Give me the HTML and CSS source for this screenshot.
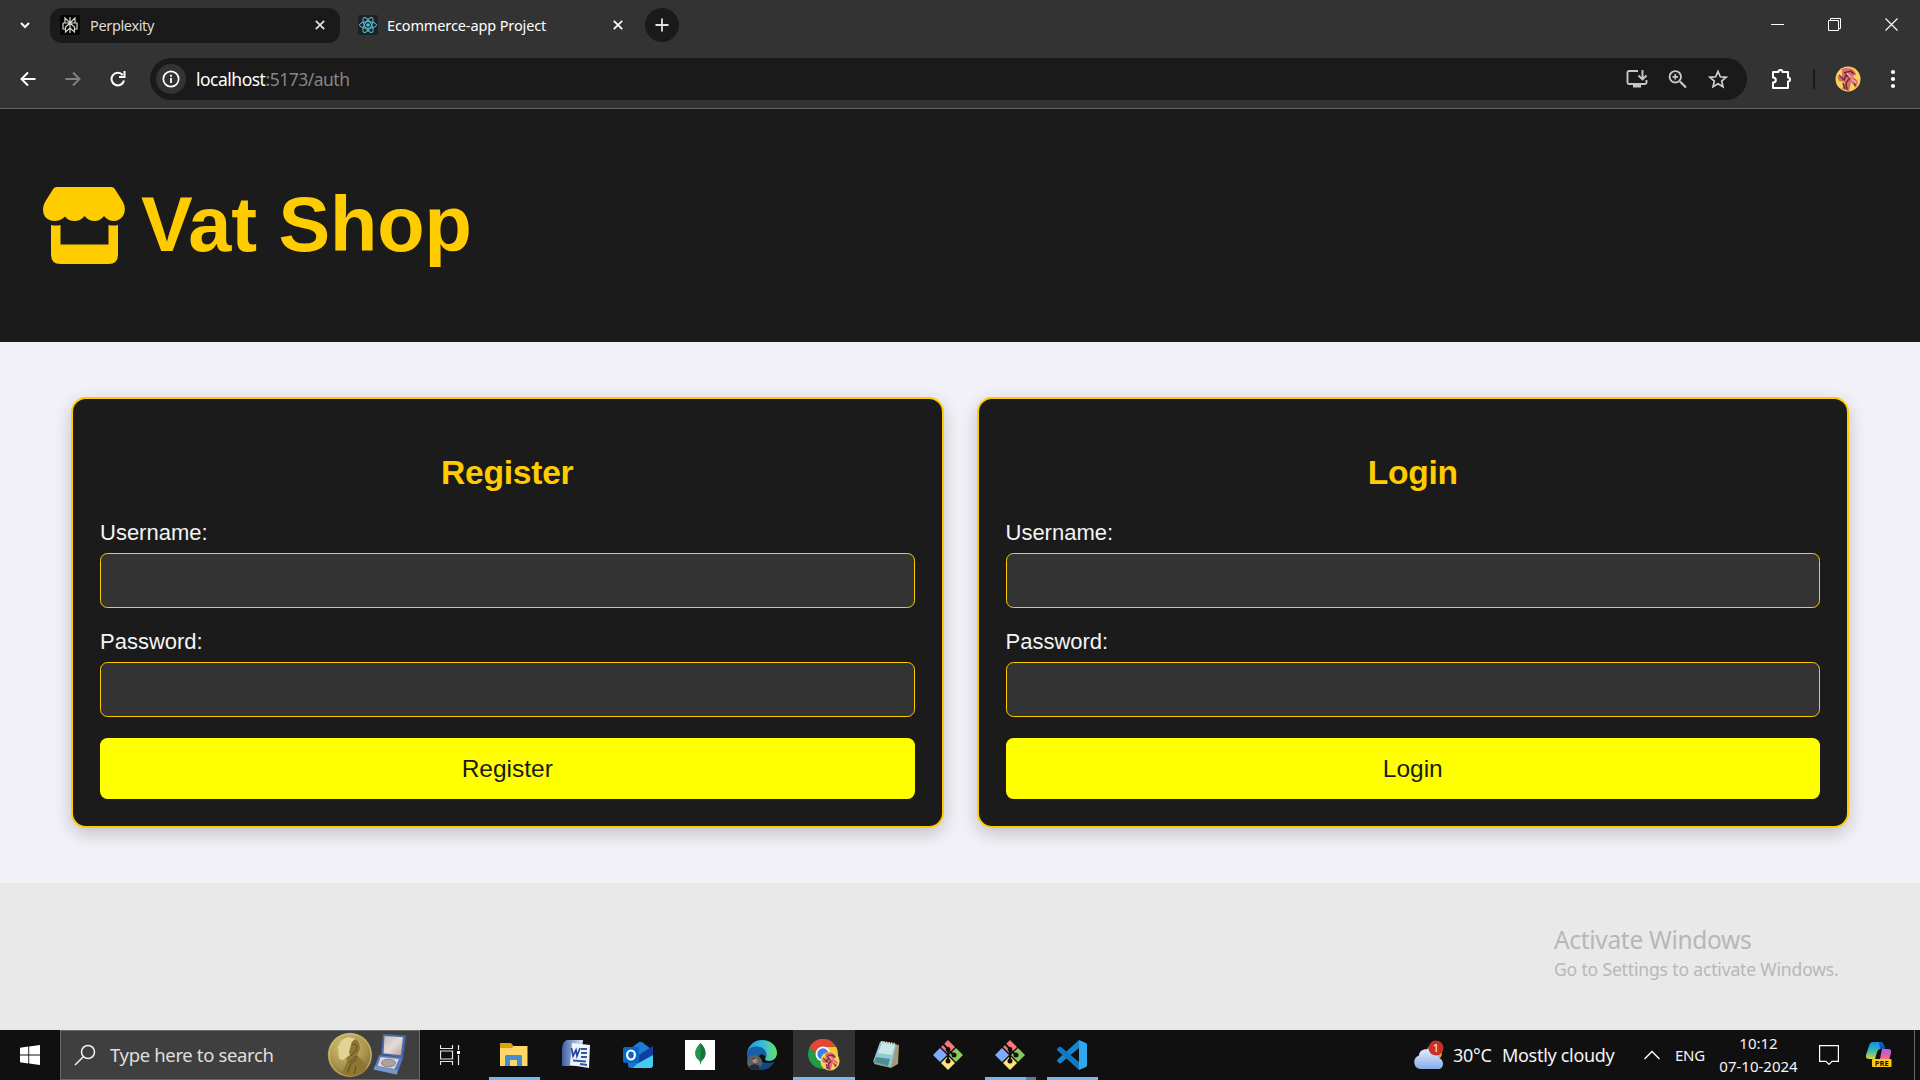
FILE: index.html
```html
<!DOCTYPE html>
<html lang="en">
<head>
<meta charset="utf-8">
<title>Ecommerce-app Project</title>
<link rel="stylesheet" href="styles.css">
</head>
<body>
<div class="tabstrip">
  <svg class="tab-search" width="12" height="12" viewBox="0 0 12 12"><path d="M2 4l4 4 4-4" fill="none" stroke="#fff" stroke-width="2"/></svg>
  <div class="tab tab-idle">
    <svg width="20" height="20" viewBox="0 0 20 20"><rect width="20" height="20" rx="2" fill="#050505"/><path d="M10 2v16M5 3l5 5 5-5v5H5zM3 8h14v6h-2.500M3 8v6h2.500M10 8l-4.500 4v5l4.500-4 4.500 4v-5z" fill="none" stroke="#d8d6cc" stroke-width="1.200"/></svg>
    <span class="tab-title">Perplexity</span>
    <svg class="x" width="10" height="10" viewBox="0 0 10 10"><path d="M.8.800l8.400 8.400M9.200.800L.8 9.200" stroke="#e3e3e3" stroke-width="1.700"/></svg>
  </div>
  <div class="tab tab-active">
    <svg width="20" height="20" viewBox="0 0 20 20"><rect width="20" height="20" rx="2" fill="#202124"/><g fill="none" stroke="#58c4dc" stroke-width="1"><ellipse cx="10" cy="10" rx="8.500" ry="3.300"/><ellipse cx="10" cy="10" rx="8.500" ry="3.300" transform="rotate(60 10 10)"/><ellipse cx="10" cy="10" rx="8.500" ry="3.300" transform="rotate(120 10 10)"/></g><circle cx="10" cy="10" r="1.700" fill="#58c4dc"/></svg>
    <span class="tab-title wide">Ecommerce-app Project</span>
    <svg class="x" width="10" height="10" viewBox="0 0 10 10"><path d="M.8.800l8.400 8.400M9.200.800L.8 9.200" stroke="#fff" stroke-width="1.700"/></svg>
  </div>
  <div class="new-tab"><svg width="14" height="14" viewBox="0 0 14 14"><path d="M7 .5v13M.5 7h13" stroke="#e3e3e3" stroke-width="1.800"/></svg></div>
  <div class="window-controls">
    <svg width="14" height="14" viewBox="0 0 14 14"><path d="M0 6.500h13" stroke="#fff"/></svg>
    <svg width="14" height="14" viewBox="0 0 14 14"><path d="M.5 2.500h10v10H.5zM2.500 2V.5h10v10H11" fill="none" stroke="#fff"/></svg>
    <svg width="14" height="14" viewBox="0 0 14 14"><path d="M.5.500l12 12M12.500.500l-12 12" stroke="#fff" stroke-width="1.100"/></svg>
  </div>
</div>
<div class="toolbar">
  <div class="nav-buttons">
    <svg width="16" height="16" viewBox="0 0 16 16"><path d="M15.500 8H2M8 1.500L1.500 8 8 14.500" fill="none" stroke="#fff" stroke-width="2"/></svg>
    <svg width="16" height="16" viewBox="0 0 16 16"><path d="M.5 8H14M8 1.500L14.500 8 8 14.500" fill="none" stroke="#818181" stroke-width="1.900"/></svg>
    <svg width="16" height="16" viewBox="0 0 16 16"><path d="M14 9.500A6.300 6.300 0 1 1 12.700 4" fill="none" stroke="#fff" stroke-width="2"/><path d="M15.500 0v7H9V5h4.500V0z" fill="#fff"/></svg>
  </div>
  <div class="omnibox">
    <div class="site-info"><svg width="18" height="18" viewBox="0 0 18 18"><circle cx="9" cy="9" r="7.700" fill="none" stroke="#fff" stroke-width="1.700"/><path d="M9 8v5M9 4.800v1.900" stroke="#fff" stroke-width="1.800"/></svg></div>
    <span class="url">localhost<span class="url-rest">:5173/auth</span></span>
    <div class="page-actions">
      <svg width="22" height="20" viewBox="0 0 22 20"><path d="M12 2H3Q1.500 2 1.500 3.500v10Q1.500 15 3 15H19Q20.500 15 20.500 13.500V11M16.500 1v9M12.500 6.500l4 4 4-4" fill="none" stroke="#c7c7c7" stroke-width="1.900"/><path d="M7 15h8v3.500H7z" fill="#c7c7c7"/></svg>
      <svg width="20" height="20" viewBox="0 0 20 20"><path d="M12 12.500l6 6" stroke="#c7c7c7" stroke-width="2.200"/><circle cx="7.300" cy="7.800" r="5.700" fill="none" stroke="#c7c7c7" stroke-width="1.900"/><path d="M7.300 5v5.600M4.500 7.800h5.600" stroke="#c7c7c7" stroke-width="1.700"/></svg>
      <svg width="20" height="20" viewBox="0 0 20 20"><path d="M10 2.500l2.300 5.300 5.700.5-4.300 3.800 1.300 5.600-5-3-5 3 1.300-5.600L2 8.300l5.700-.5z" fill="none" stroke="#d0d0d0" stroke-width="1.700"/></svg>
    </div>
  </div>
  <div class="toolbar-end">
    <svg width="22" height="22" viewBox="0 0 22 22"><path d="M2 4h5.500a2 2 0 0 1 4 0H17v5.500a2 2 0 0 1 0 4V20H2v-5.500c3.800 0 3.800-5 0-5z" fill="none" stroke="#fff" stroke-width="2" stroke-linejoin="round"/></svg>
    <span class="divider"></span>
    <svg width="26" height="26" viewBox="0 0 26 26"><use href="#avatar"/></svg>
    <svg width="6" height="20" viewBox="0 0 6 20"><g fill="#fff"><circle cx="3" cy="3" r="2.100"/><circle cx="3" cy="10" r="2.100"/><circle cx="3" cy="17" r="2.100"/></g></svg>
  </div>
</div>

<header class="site-header">
  <svg class="shop-icon" width="82" height="77" viewBox="0 0 82 77" fill="#fc0"><path d="M13.500 0H68.500Q70.500 0 71.500 1.500L80 15C85 25 79 34 71 34Q65 34 61 29Q57.500 34 51.500 34Q45.500 34 41.500 29Q38 34 31.500 34Q25.500 34 22 29.500Q17.500 34 11 34C2 34-3 25 2 15L10.500 1.500Q11.500 0 13.500 0zM8 38Q12.500 39 17.500 38V57.500H65.500V38Q70.500 39 75 38V67.500Q75 77 65.500 77H17.500Q8 77 8 67.500z"/></svg>
  <h1>Vat Shop</h1>
</header>
<main class="auth">
  <form class="card">
    <h2>Register</h2>
    <label>Username:<input type="text"></label>
    <label>Password:<input type="password"></label>
    <button type="button">Register</button>
  </form>
  <form class="card">
    <h2>Login</h2>
    <label>Username:<input type="text"></label>
    <label>Password:<input type="password"></label>
    <button type="button">Login</button>
  </form>
</main>
<section class="desktop">
  <div class="activation"><p class="act-title">Activate Windows</p><p class="act-sub">Go to Settings to activate Windows.</p></div>
</section>

<footer class="taskbar">
  <div class="start"><svg width="20" height="20" viewBox="0 0 20 20"><path d="M0 2.700L8.300 1.500V9.500H0zM9.200 1.400L20 0V9.500H9.200zM0 10.500H8.300V18.500L0 17.300zM9.200 10.500H20V20L9.200 18.600z" fill="#fff"/></svg></div>
  <div class="search">
    <svg width="22" height="22" viewBox="0 0 22 22"><circle cx="14" cy="8" r="6.500" fill="none" stroke="#f2f2f2" stroke-width="1.500"/><path d="M9.300 12.700L1 21" stroke="#f2f2f2" stroke-width="1.500"/></svg>
    <span class="search-text">Type here to search</span>
    <svg class="medal" width="80" height="46" viewBox="0 0 80 46">
      <defs><radialGradient id="gold" cx=".4" cy=".3" r=".8"><stop offset="0" stop-color="#d7c67a"/><stop offset=".6" stop-color="#a8924b"/><stop offset="1" stop-color="#75602a"/></radialGradient><linearGradient id="satin" x2="1" y2="1"><stop offset="0" stop-color="#c9b8b0"/><stop offset=".5" stop-color="#e5dcd8"/><stop offset="1" stop-color="#b5a39c"/></linearGradient></defs>
      <circle cx="23" cy="23" r="22.200" fill="url(#gold)"/><circle cx="23" cy="23" r="21" fill="none" stroke="#d6c887" stroke-width=".8"/>
      <path d="M15 7c5-4 14-3 17 4 2 5 0 9-2 12l7 7c3 3 3 6 1 8-4 5-10 6-15 6-3 0-6-1-8-2l5-13z" fill="#8d7733"/><path d="M14 9c3-5 10-5 15-2-3 1-5 3-5 6l-2 7 1 3-7 5c-4 0-5-3-4-7l-1-2 1-2-2-1 3-4z" fill="#e0d393"/><path d="M25 13c4-3 6 1 4 5l-5 6M22 31l8-7M20 41l4-9 6-5M27 42l2-8" fill="none" stroke="#5f4d1d" stroke-width="1"/>
      <path d="M56 2l23 1.500-3 22-22-3z" fill="#4a68ad"/><path d="M57.500 4l18.500 1.300-2.200 18-17.300-2z" fill="url(#satin)"/><path d="M52 23l24 2.500-6 17-23.500-5z" fill="#5878bd"/><path d="M53.500 25l18.500 2-4.500 10-17-3z" fill="#ddd4d4"/><ellipse cx="61.500" cy="31" rx="7" ry="3.800" fill="#aaa3a2" stroke="#777" stroke-width=".8"/><path d="M46.500 37.500L70 42.500V38l-22-4z" fill="#7794cb"/>
    </svg>
  </div>
  <div class="app task-view"><svg width="20" height="20" viewBox="0 0 20 20"><path d="M.5 0v3.500h12V0M.5 20v-3.500h12V20M.5 6h12v8H.5zM18.500 0v5M18.500 10v10" fill="none" stroke="#e8e8e8" stroke-width="1.200"/><path d="M17 6h3v3h-3z" fill="#fff"/></svg></div>
  <div class="app open"><svg width="30" height="30" viewBox="0 0 30 30"><path d="M1 3h11l2.500 3H28v5H1z" fill="#e39e0b"/><path d="M1 8h12l2-2h13.500v20H1z" fill="#ffd766"/><path d="M6 26V16.500Q6 15 7.500 15h14Q23 15 23 16.500V26h-5v-6h-7v6z" fill="#3f8fd2"/></svg></div>
  <div class="app"><svg width="30" height="30" viewBox="0 0 30 30"><defs><linearGradient id="word"><stop offset="0" stop-color="#3c5da5"/><stop offset="1" stop-color="#dbe5f7"/></linearGradient></defs><path d="M6 0h16l-3 26H1V8Q2 1 6 0z" fill="url(#word)"/><path d="M11 3l18 2-1 23-19-3z" fill="#eef3fc"/><path d="M20 9h6M20 13h6M20 17h6M12 20.500l13 1M19 24l7 1" stroke="#3358a4" stroke-width="1.800"/><path d="M10.500 8l1.500 8 3-6 1 6 3-8" fill="none" stroke="#244a98" stroke-width="1.700"/></svg></div>
  <div class="app"><svg width="30" height="30" viewBox="0 0 30 30"><path d="M4 11L16 2Q17.500 1.300 19 2l10 8v15q0 3-3 3H8q-3 0-3-3z" fill="#2373c9"/><path d="M9 8l9-6 10 7-11 8z" fill="#1b7fd3"/><path d="M14 16l16-10v9L16 24z" fill="#123f9d"/><path d="M14 24l16-9v10q0 3-3 3H10z" fill="#45ccf1"/><rect y="7" width="16" height="16" rx="2" fill="#0868c4"/><ellipse cx="8" cy="15" rx="3.900" ry="4.500" fill="none" stroke="#fff" stroke-width="2.200"/></svg></div>
  <div class="app"><svg width="30" height="30" viewBox="0 0 30 30"><path d="M0 0h30v30H0z" fill="#fff"/><path d="M15.500 3c6 6 7 13 1 18l-1 4-1-4C8 16 9 9 15.500 3z" fill="#249447"/><path d="M15.500 3c6 6 7 13 1 18l-1 1z" fill="#157538"/></svg></div>
  <div class="app"><svg width="30" height="30" viewBox="0 0 30 30"><defs><linearGradient id="wave"><stop offset="0" stop-color="#218fd7"/><stop offset=".5" stop-color="#35bce1"/><stop offset="1" stop-color="#65df67"/></linearGradient></defs><path d="M0 15C0 6 7 0 15 0c9 0 15 6 15 13 0 5-4 8-8 8-2 0-4-1-4-2 3-5-1-9-5-9z" fill="url(#wave)"/><path d="M0 15C0 8 7 5 13 7c5 1 8 6 6 11-1-3-4-5-6-3-4 4 3 11 14 7-3 6-10 9-17 7C4 27 0 22 0 15z" fill="#1560a8"/><path d="M13 15c-4 4 3 11 14 7-3 6-10 9-17 7-2-5-2-11 3-14z" fill="#124a88"/><circle cx="7.500" cy="22.500" r="7.500" fill="#5b6062"/><path d="M2 28c1-5 10-5 11 0q-5 4-11 0z" fill="#222c36"/><circle cx="8" cy="20.500" r="2.500" fill="#b18874"/><path d="M5.500 20q0-4 5 0l-1-1h-3z" fill="#222"/></svg></div>
  <div class="app focused"><svg width="32" height="32" viewBox="0 0 32 32"><circle cx="15" cy="15" r="15" fill="#229b49"/><path d="M2 7.500A15 15 0 0 1 28 7.500L15 8 9 17z" fill="#e84435"/><path d="M15 8h13.200A15 15 0 0 1 15 30l7-11z" fill="#fbc52b"/><circle cx="15" cy="15" r="7.500" fill="#fff"/><circle cx="15" cy="15" r="5.700" fill="#3b80ee"/><svg x="12" y="12" width="20" height="20" viewBox="0 0 26 26"><g id="avatar"><circle cx="13" cy="13" r="12.500" fill="#f8d05c"/><path d="M7 3c7-3 14 1 14 6l-4 1 6 5-2 7-5-6-2 9-7-2 3-7-6-1-2-5 5 2z" fill="#df686f"/><path d="M9 7l7-2 3 3M4 9l5 5 2-5 4 3-4 5 1 7M19 13l1 7M8 17l2 6M16 6l3 2" fill="none" stroke="#672f39" stroke-width="1.500"/><path d="M12 7l4 5M17 13l4 4" stroke="#f3a3a0" stroke-width="2"/></g></svg></svg></div>
  <div class="app"><svg width="30" height="30" viewBox="0 0 30 30"><path d="M10 1l18 4-1 19-7 4-17-4z" fill="#a69a7c"/><path d="M9 2l16 3-5 22-18-5z" fill="#8fc9d1"/><path d="M11 3l13 2-3 10-14-2z" fill="#c9e7e8"/><path d="M5 17l14 2-2 7-14-4z" fill="#4b8d99"/><path d="M10 2l15 2" stroke="#e8e4d6" stroke-width="2" stroke-dasharray="1.500 1"/></svg></div>
  <div class="app"><svg width="30" height="30" viewBox="0 0 30 30"><g id="git"><path d="M15 0l7 7-7 7-7-7z" fill="#f87777"/><path d="M7 8l7 7-7 7-7-7z" fill="#7eabff"/><path d="M23 8l7 7-7 7-7-7z" fill="#85cc59"/><path d="M15 16l7 7-7 7-7-7z" fill="#ffe279"/><path d="M10 4l5 5v12M15 10l6 5" fill="none" stroke="#111" stroke-width="1.900"/><circle cx="15" cy="9.500" r="2.400" fill="#111"/><circle cx="15" cy="21" r="2.500" fill="#111"/><circle cx="21" cy="15" r="2.500" fill="#111"/></g></svg></div>
  <div class="app open stacked"><svg width="30" height="30" viewBox="0 0 30 30"><use href="#git"/></svg></div>
  <div class="app open"><svg width="30" height="30" viewBox="0 0 30 30"><path d="M22 0v8L4 23q-1 1-2 0L.5 21.500q-1-1 0-2z" fill="#1684ce"/><path d="M22 30v-8L4 7Q3 6 2 7L.5 8.500q-1 1 0 2z" fill="#0f78c2"/><path d="M22 0l7 3q1 .5 1 2v20q0 1.500-1 2l-7 3z" fill="#2fa8ee"/></svg></div>
  <div class="tray">
    <svg class="weather" width="31" height="30" viewBox="0 0 31 30"><defs><linearGradient id="cloud" x2="0" y2="1"><stop offset="0" stop-color="#e2ecfd"/><stop offset="1" stop-color="#86aceb"/></linearGradient></defs><circle cx="21" cy="13" r="8" fill="#f6a21b"/><path d="M7 29a7 7 0 0 1-1-13.500C6 8 18 7 20 14c4-1 6 2 6 4 6 2 5 11-1 11z" fill="url(#cloud)"/><circle cx="23" cy="8" r="7.500" fill="#c9302c"/><text x="23" y="12" class="badge-num">1</text></svg>
    <span class="temp">30°C</span><span class="forecast">Mostly cloudy</span>
    <svg class="caret" width="16" height="10" viewBox="0 0 16 10"><path d="M.5 9L8 1.500 15.500 9" fill="none" stroke="#fff" stroke-width="1.400"/></svg>
    <span class="lang">ENG</span>
    <div class="clock"><span class="time">10:12</span><span class="date">07-10-2024</span></div>
    <svg class="notify" width="20" height="20" viewBox="0 0 20 20"><path d="M.6.600h18.800v15.800H13l-3 3-3-3H.6z" fill="none" stroke="#fff" stroke-width="1.200"/></svg>
    <svg class="copilot" width="26" height="26" viewBox="0 0 26 26"><defs><linearGradient id="cl" x2="0" y2="1"><stop offset="0" stop-color="#168de2"/><stop offset=".5" stop-color="#36b8b2"/><stop offset="1" stop-color="#eacf35"/></linearGradient><linearGradient id="cr" x2="0" y2="1"><stop offset="0" stop-color="#9d69ee"/><stop offset=".5" stop-color="#ec5d99"/><stop offset="1" stop-color="#fa9b62"/></linearGradient></defs><path d="M7 0h8q2 0 3 4l1 3h-5q-2 0-3 3l-2 7H3q-4 0-3-4L3 4q1-4 4-4z" fill="url(#cl)"/><path d="M13 0q4 0 5 4l1 3h-5z" fill="#1550bf"/><path d="M16 7h6q4 0 3 4l-2 7q-1 3-5 3h-8q3 0 4-4z" fill="url(#cr)"/><rect x="6" y="17" width="19.500" height="8" rx="1" fill="#ffca0b"/><text x="15.800" y="24" class="pre">PRE</text></svg>
    <span class="peek"></span>
  </div>
</footer>
</body>
</html>
```
FILE: styles.css
```css
* { box-sizing: border-box; }
body { margin: 0; width: 1920px; height: 1080px; overflow: hidden; display: flex; flex-direction: column; font-family: "Liberation Sans", Arial, sans-serif; background: #e9e9e9; }
svg { display: block; flex: none; }
h1, h2, p { margin: 0; }

.tabstrip, .toolbar, .taskbar { font-family: "Noto Sans", "Open Sans", sans-serif; white-space: nowrap; }
.tabstrip { height: 50px; flex: none; background: #333; display: flex; align-items: center; padding-left: 19px; }
.tab { display: flex; align-items: center; height: 35px; border-radius: 12px; }
.tab-idle { width: 290px; margin-left: 19px; padding: 0 15px 0 10px; background: #1a1a1a; color: #dcdcdc; }
.tab-active { width: 283px; padding: 0 0 0 18px; color: #fff; }
.tab .x { margin-left: auto; }
.tab-title { margin-left: 10px; font-size: 14.500px; letter-spacing: -.35px; }
.tab-title.wide { margin-left: 9px; letter-spacing: -.12px; }
.new-tab { width: 34px; height: 34px; margin-left: 22px; border-radius: 50%; background: #1a1a1a; display: grid; place-items: center; }
.window-controls { display: flex; gap: 43px; margin-left: auto; padding-right: 21px; }

.toolbar { height: 59px; flex: none; background: #333; border-bottom: 1px solid #666; display: flex; align-items: center; padding: 0 24px 0 20px; }
.nav-buttons { display: flex; gap: 29px; width: 130px; }
.omnibox { width: 1597px; height: 42px; border-radius: 21px; background: #1a1a1a; display: flex; align-items: center; padding: 0 19px 0 6px; }
.site-info { width: 30px; height: 30px; border-radius: 50%; background: #333; display: grid; place-items: center; }
.url { margin-left: 10px; font-size: 17.500px; letter-spacing: -.5px; color: #fff; }
.url-rest { color: #868686; }
.page-actions { display: flex; gap: 20px; margin-left: auto; }
.toolbar-end { flex: 1; display: flex; align-items: center; padding-left: 24px; }
.divider { width: 2px; height: 20px; margin: 0 20px 0 20px; background: #1a1a1a; }
.toolbar-end svg:last-child { margin-left: auto; }

.site-header { height: 233px; flex: none; display: flex; align-items: center; padding: 0 0 0 43px; background: #1b1b1b; color: #fc0; }
.site-header h1 { margin-left: 16px; padding-bottom: 3px; font-size: 77.500px; line-height: 88px; letter-spacing: -.1px; }
.auth { height: 541px; flex: none; padding: 55px 71px 0 71px; display: grid; grid-template-columns: 1fr 1fr; gap: 33px; align-items: start; background: #f2f1f7; }
.card { height: 431px; padding: 54px 27px 0; border: 2px solid #fc0; border-radius: 15px; background: #1b1b1b; box-shadow: 0 6px 18px rgba(0, 0, 0, .2); color: #f4f4f4; }
.card h2 { margin-bottom: 27px; font-size: 33.600px; line-height: 40px; letter-spacing: -.25px; text-align: center; color: #fc0; }
.card label { display: block; height: 109px; font-size: 22px; line-height: 26px; }
.card input { display: block; width: 100%; height: 55px; margin-top: 7px; border: 1px solid #fc0; border-radius: 7.500px; background: #333; color: #fff; }
.card button { display: block; width: 100%; height: 61px; margin-top: 0; border: 0; border-radius: 7.500px; background: #ff0; color: #1b1b1b; font: 24.500px "Liberation Sans", Arial, sans-serif; }

.desktop { flex: 1; padding: 40px 0 0 1554px; font-family: "Noto Sans", sans-serif; color: #b7b7b7; background: #e9e9e9; white-space: nowrap; }
.act-title { font-size: 24.500px; line-height: 34px; letter-spacing: -.32px; }
.act-sub { font-size: 17.500px; line-height: 25px; letter-spacing: -.15px; }

.taskbar { height: 50px; flex: none; display: flex; background: #101010; color: #f5f5f5; }
.start { width: 60px; display: grid; place-items: center; }
.search { width: 360px; display: flex; align-items: center; padding: 0 12px 0 13px; background: #3f3f3f; border: 1px solid #686868; }
.search-text { margin-left: 14px; padding-bottom: 2px; font-size: 18.500px; letter-spacing: -.35px; color: #dfdfdf; }
.medal { margin-left: auto; }
.app { width: 62px; display: grid; place-items: center; position: relative; }
.task-view { width: 63px; padding-right: 4px; }
.app.focused { background: #333; }
.app.open::after, .app.focused::after { content: ""; position: absolute; left: 6px; right: 5px; bottom: 0; height: 3px; background: #76b9ed; }
.app.focused::after { left: 0; right: 0; }
.app.stacked::after { background: linear-gradient(90deg, #76b9ed 80%, #527fa6 80%); }
.tray { flex: 1; display: flex; align-items: center; }
.weather { margin-left: 310px; }
.temp, .forecast { font-size: 18px; letter-spacing: -.3px; }
.temp { width: 49px; margin-left: 9px; }
.forecast { width: 142px; }
.caret { margin-right: 15px; }
.lang { width: 45px; font-size: 15px; letter-spacing: -.25px; }
.clock { width: 77px; display: flex; flex-direction: column; align-items: center; font-size: 15px; line-height: 23px; }
.notify { margin-left: 22px; }
.copilot { margin-left: 27px; }
.peek { width: 1px; height: 50px; margin-left: 22px; background: #666; }
.badge-num { font-size: 11px; text-anchor: middle; fill: #fff; }
.pre { font: bold 7.500px "Open Sans", sans-serif; text-anchor: middle; fill: #111; }
```
